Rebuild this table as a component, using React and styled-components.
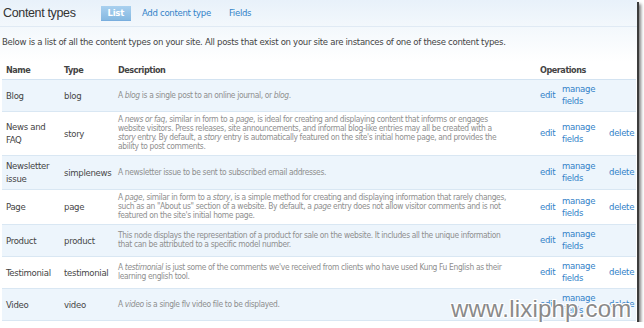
import React from "react";
import styled, { createGlobalStyle } from "styled-components";

const GlobalStyle = createGlobalStyle`
  html, body { margin: 0; padding: 0; background: #ffffff; }
  body { font-family: "DejaVu Sans Condensed", "DejaVu Sans", sans-serif; }
`;

const Frame = styled.div`
  position: relative;
  width: 637px;
  height: 322px;
  overflow: hidden;
  background: linear-gradient(#e8f1fa 0px, #f3f8fc 27px, #ffffff 62px);
  box-shadow: 2px 2px 0 0 #3c3c3c, 4px 4px 3px 0 rgba(0, 0, 0, 0.5);
`;

const TopBar = styled.div`
  display: flex;
  align-items: center;
  height: 26px;
  padding-left: 3px;
  border-bottom: 1px solid #e0eaf4;
`;

const Title = styled.h1`
  margin: 0 25px 0 0;
  font-family: "Liberation Sans", Arial, sans-serif;
  font-weight: normal;
  font-size: 12.5px;
  letter-spacing: -0.35px;
  color: #333;
  line-height: 16px;
`;

const Tabs = styled.nav`
  display: flex;
  align-items: center;
  gap: 4px;
`;

const Tab = styled.a`
  display: block;
  height: 14px;
  line-height: 14px;
  padding: 0 7px;
  font-size: 9.5px;
  letter-spacing: -0.3px;
  text-decoration: none;
  color: ${(p) => (p.$active ? "#ffffff" : "#3382c8")};
  font-weight: ${(p) => (p.$active ? "bold" : "normal")};
  background: ${(p) =>
    p.$active ? "linear-gradient(#a9d0ef, #86b9e1)" : "transparent"};
  border-bottom: 1px solid ${(p) => (p.$active ? "#79aede" : "transparent")};
`;

const Intro = styled.p`
  margin: 9px 0 16px 2px;
  font-size: 9.5px;
  letter-spacing: -0.3px;
  line-height: 12px;
  color: #444;
`;

const Table = styled.table`
  margin-left: 2px;
  width: 634px;
  table-layout: fixed;
  border-collapse: collapse;
`;

const Th = styled.th`
  text-align: left;
  padding: 0 4px 1.5px;
  font-size: 9px;
  letter-spacing: -0.45px;
  line-height: 13px;
  font-weight: bold;
  color: #444;
  border-bottom: 1px solid #d3e3f1;
`;

const Row = styled.tr`
  background: ${(p) => (p.$odd ? "#edf5fc" : "#ffffff")};
  border-bottom: 1px solid #d9e7f3;
`;

const Cell = styled.td`
  padding: 3.5px 4px;
  vertical-align: middle;
  font-size: 9.5px;
  letter-spacing: -0.3px;
  line-height: 13px;
  color: #444;
`;

const TypeCell = styled(Cell)`
  white-space: nowrap;
  color: #474747;
`;

const DescCell = styled(Cell)`
  font-size: 8.4px;
  letter-spacing: -0.35px;
  line-height: 9px;
  color: #8e8e8e;
  white-space: nowrap;
`;

const OpCell = styled(Cell)`
  line-height: 12px;
`;

const OpLink = styled.a`
  color: #3382c8;
  text-decoration: none;
`;

const Watermark = styled.div`
  position: absolute;
  left: 451px;
  top: 297px;
  font-family: "Liberation Sans", Arial, sans-serif;
  font-size: 24px;
  line-height: 24px;
  letter-spacing: 0.2px;
  color: #8a8a8a;
  white-space: nowrap;
  pointer-events: none;
  text-shadow: 1px 0 0 #fff, -1px 0 0 #fff, 0 1px 0 #fff, 0 -1px 0 #fff,
    1px 1px 0 #fff, -1px -1px 0 #fff, 1px -1px 0 #fff, -1px 1px 0 #fff;
`;

const rows = [
  {
    name: "Blog",
    type: "blog",
    del: false,
    desc: [
      <>A <em>blog</em> is a single post to an online journal, or <em>blog</em>.</>,
    ],
  },
  {
    name: "News and FAQ",
    type: "story",
    del: true,
    desc: [
      <>A <em>news or faq</em>, similar in form to a <em>page</em>, is ideal for creating and displaying content that informs or engages</>,
      <>website visitors. Press releases, site announcements, and informal blog-like entries may all be created with a</>,
      <><em>story</em> entry. By default, a <em>story</em> entry is automatically featured on the site's initial home page, and provides the</>,
      <>ability to post comments.</>,
    ],
  },
  {
    name: "Newsletter issue",
    type: "simplenews",
    del: true,
    desc: [<>A newsletter issue to be sent to subscribed email addresses.</>],
  },
  {
    name: "Page",
    type: "page",
    del: true,
    desc: [
      <>A <em>page</em>, similar in form to a <em>story</em>, is a simple method for creating and displaying information that rarely changes,</>,
      <>such as an "About us" section of a website. By default, a <em>page</em> entry does not allow visitor comments and is not</>,
      <>featured on the site's initial home page.</>,
    ],
  },
  {
    name: "Product",
    type: "product",
    del: false,
    desc: [
      <>This node displays the representation of a product for sale on the website. It includes all the unique information</>,
      <>that can be attributed to a specific model number.</>,
    ],
  },
  {
    name: "Testimonial",
    type: "testimonial",
    del: true,
    desc: [
      <>A <em>testimonial</em> is just some of the comments we've received from clients who have used Kung Fu English as their</>,
      <>learning english tool.</>,
    ],
  },
  {
    name: "Video",
    type: "video",
    del: true,
    desc: [<>A <em>video</em> is a single flv video file to be displayed.</>],
  },
];

export default function App() {
  return (
    <>
      <GlobalStyle />
      <Frame>
        <TopBar>
          <Title>Content types</Title>
          <Tabs>
            <Tab $active href="#">List</Tab>
            <Tab href="#">Add content type</Tab>
            <Tab href="#">Fields</Tab>
          </Tabs>
        </TopBar>
        <Intro>
          Below is a list of all the content types on your site. All posts that
          exist on your site are instances of one of these content types.
        </Intro>
        <Table>
          <colgroup>
            <col style={{ width: 58 }} />
            <col style={{ width: 54 }} />
            <col style={{ width: 422 }} />
            <col style={{ width: 22 }} />
            <col style={{ width: 47 }} />
            <col style={{ width: 31 }} />
          </colgroup>
          <thead>
            <tr>
              <Th>Name</Th>
              <Th>Type</Th>
              <Th>Description</Th>
              <Th colSpan={3}>Operations</Th>
            </tr>
          </thead>
          <tbody>
            {rows.map((r, i) => (
              <Row key={r.type} $odd={i % 2 === 0}>
                <Cell>{r.name}</Cell>
                <TypeCell>{r.type}</TypeCell>
                <DescCell>
                  {r.desc.map((line, j) => (
                    <React.Fragment key={j}>
                      {j > 0 && <br />}
                      {line}
                    </React.Fragment>
                  ))}
                </DescCell>
                <OpCell>
                  <OpLink href="#">edit</OpLink>
                </OpCell>
                <OpCell>
                  <OpLink href="#">manage fields</OpLink>
                </OpCell>
                <OpCell>{r.del && <OpLink href="#">delete</OpLink>}</OpCell>
              </Row>
            ))}
          </tbody>
        </Table>
        <Watermark>www.lixiphp.com</Watermark>
      </Frame>
    </>
  );
}
